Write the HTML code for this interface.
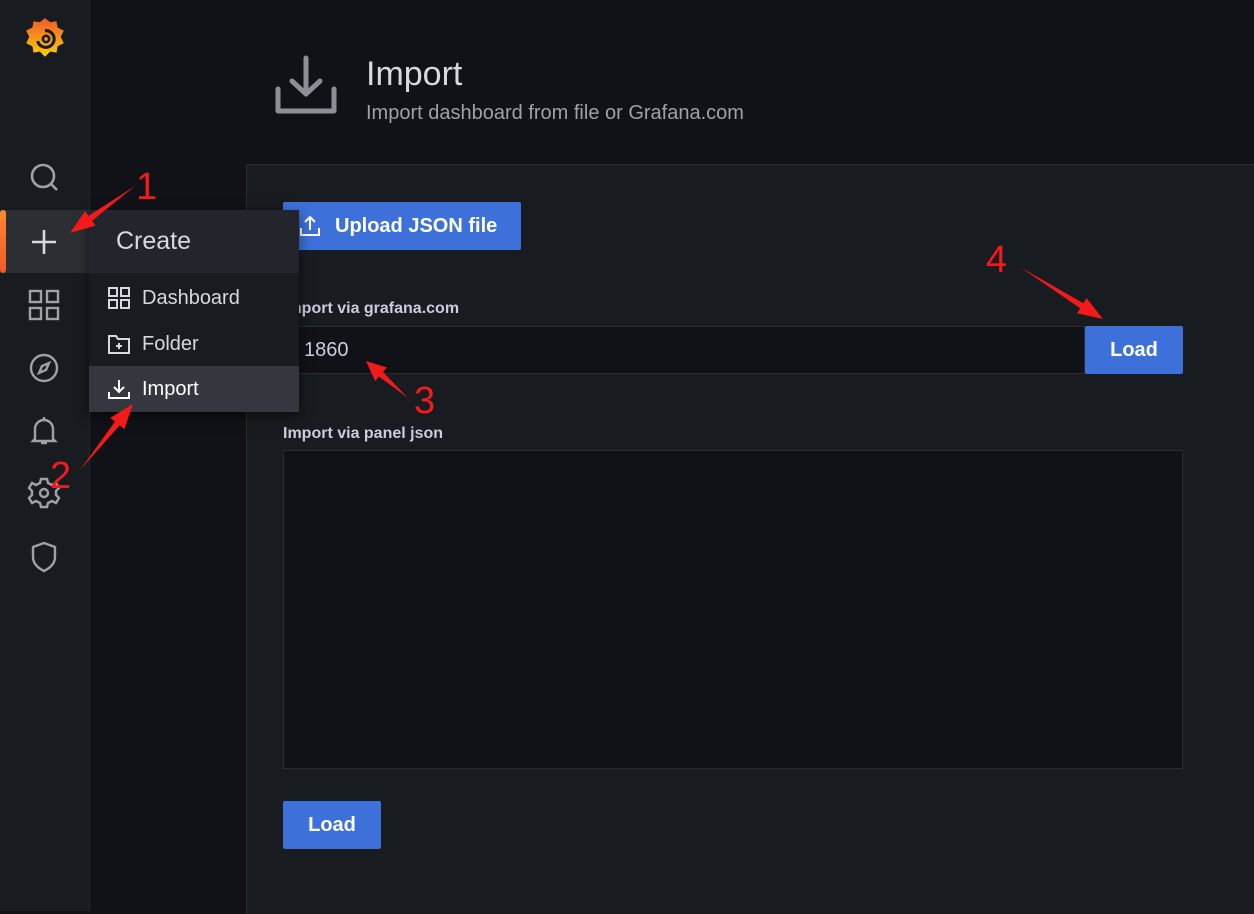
<!DOCTYPE html>
<html><head><meta charset="utf-8"><style>
*{box-sizing:border-box;margin:0;padding:0}
body{width:1254px;height:911px;background:#111217;font-family:"Liberation Sans",Roboto,sans-serif;position:relative;overflow:hidden;color:#ccccdc}
.side{position:absolute;left:0;top:0;width:90px;height:911px;background:#181b1f;border-right:1px solid #25272c}
.ic{position:absolute;left:27px;width:34px;height:34px}
.panel{position:absolute;left:246px;top:164px;width:1010px;height:750px;background:#181b1f;border-top:1px solid #2a2c31;border-left:1px solid #2a2c31}
.btn{position:absolute;background:#3d71d9;color:#fff;font-weight:bold;font-size:20px;border-radius:2px;display:flex;align-items:center;justify-content:center}
.lbl{position:absolute;font-size:16px;font-weight:bold;color:#ccccdc}
.menu{position:absolute;left:89px;top:210px;width:210px;height:202px;background:#181b1f;box-shadow:0 4px 12px rgba(0,0,0,.5)}
.mi{position:absolute;left:0;width:210px;height:46px;display:flex;align-items:center;font-size:20px;color:#d8d9e0}
.mi svg{margin-left:19px;margin-right:12px}
</style></head><body>
<div class="side">
<svg style="position:absolute;left:23px;top:16px" width="44" height="46" viewBox="0 0 42 44"><defs><linearGradient id="g" x1="0" y1="1" x2="0" y2="0"><stop offset="0" stop-color="#fcd00f"/><stop offset="1" stop-color="#f05a28"/></linearGradient></defs><path d="M21 2l5 4 6-1 1 6 6 3-3 6 3 6-6 3-1 6-6-1-5 5-5-5-6 1-1-6-6-3 3-6-3-6 6-3 1-6 6 1z" fill="url(#g)"/><path d="M21 14a8 8 0 1 1-7 10" fill="none" stroke="#181b1f" stroke-width="3"/><circle cx="22" cy="22" r="3" fill="none" stroke="#181b1f" stroke-width="2.5"/></svg>
<svg class="ic" style="top:160px" viewBox="0 0 34 34" fill="none" stroke="#9fa1a8" stroke-width="2.6"><circle cx="16" cy="16" r="11"/><path d="M24 24l6 6"/></svg>
<div style="position:absolute;left:0;top:210px;width:90px;height:63px;background:#2b2e33"></div>
<div style="position:absolute;left:0;top:210px;width:6px;height:63px;background:linear-gradient(#ff8833,#f05a28);border-radius:3px"></div>
<svg class="ic" style="top:225px" viewBox="0 0 34 34" stroke="#d8d9e0" stroke-width="2.6"><path d="M17 5v24M5 17h24"/></svg>
<svg class="ic" style="top:288px" viewBox="0 0 34 34" fill="none" stroke="#9fa1a8" stroke-width="2.4"><rect x="3" y="3" width="11" height="11"/><rect x="20" y="3" width="11" height="11"/><rect x="3" y="20" width="11" height="11"/><rect x="20" y="20" width="11" height="11"/></svg>
<svg class="ic" style="top:351px" viewBox="0 0 34 34" fill="none" stroke="#9fa1a8" stroke-width="2.4"><circle cx="17" cy="17" r="13"/><path d="M22 12l-3 7-7 3 3-7z"/></svg>
<svg class="ic" style="top:414px" viewBox="0 0 34 34" fill="none" stroke="#9fa1a8" stroke-width="2.4"><path d="M8 25V15a9 9 0 0118 0v10l2 2H6z M14 29h6 M17 3v3"/></svg>
<svg class="ic" style="top:476px" viewBox="0 0 34 34" fill="none" stroke="#9fa1a8" stroke-width="2.4"><circle cx="17" cy="17" r="4"/><path d="M14 3h6l1 4 4 2 4-2 3 5-3 3v4l3 3-3 5-4-2-4 2-1 4h-6l-1-4-4-2-4 2-3-5 3-3v-4l-3-3 3-5 4 2 4-2z"/></svg>
<svg class="ic" style="top:540px" viewBox="0 0 34 34" fill="none" stroke="#9fa1a8" stroke-width="2.4"><path d="M17 3l11 4v10c0 7-5 11-11 14C11 28 6 24 6 17V7z"/></svg>
</div>
<svg style="position:absolute;left:274px;top:55px" width="64" height="62" viewBox="0 0 64 62" fill="none" stroke="#8e8e96" stroke-width="5" stroke-linecap="round" stroke-linejoin="round"><path d="M32 3v36M18 26l14 13 14-13M4 34v22h56V34"/></svg>
<div style="position:absolute;left:366px;top:55px;font-size:34px;color:#d8d9e0">Import</div>
<div style="position:absolute;left:366px;top:102px;font-size:20px;color:#9fa1a8">Import dashboard from file or Grafana.com</div>
<div class="panel"></div>
<div class="btn" style="left:283px;top:202px;width:238px;height:48px;justify-content:flex-start;padding-left:16px"><svg width="22" height="22" viewBox="0 0 22 22" fill="none" stroke="#fff" stroke-width="2"><path d="M11 15V2M6 7l5-5 5 5M2 13v7h18v-7"/></svg><span style="margin-left:14px">Upload JSON file</span></div>
<div class="lbl" style="left:283px;top:300px">Import via grafana.com</div>
<div style="position:absolute;left:283px;top:326px;width:802px;height:48px;background:#111217;border:1px solid #2a2c31;font-size:20px;color:#ccccdc;padding:12px 0 0 20px">1860</div>
<div class="btn" style="left:1085px;top:326px;width:98px;height:48px">Load</div>
<div class="lbl" style="left:283px;top:425px">Import via panel json</div>
<div style="position:absolute;left:283px;top:450px;width:900px;height:319px;background:#111217;border:1px solid #2a2c31"></div>
<div class="btn" style="left:283px;top:801px;width:98px;height:48px">Load</div>
<div class="menu">
<div style="position:absolute;left:0;top:0;width:210px;height:63px;background:#22252b;font-size:25px;color:#d8d9e0;padding:17px 0 0 27px">Create</div>
<div class="mi" style="top:65px"><svg width="22" height="22" viewBox="0 0 22 22" fill="none" stroke="#d8d9e0" stroke-width="2"><rect x="1" y="1" width="8" height="8"/><rect x="13" y="1" width="8" height="8"/><rect x="1" y="13" width="8" height="8"/><rect x="13" y="13" width="8" height="8"/></svg>Dashboard</div>
<div class="mi" style="top:111px"><svg width="22" height="22" viewBox="0 0 22 22" fill="none" stroke="#d8d9e0" stroke-width="2"><path d="M1 3h7l2 3h11v14H1z M11 10v6M8 13h6"/></svg>Folder</div>
<div class="mi" style="top:156px;background:#34373d;height:46px"><svg width="22" height="22" viewBox="0 0 22 22" fill="none" stroke="#fff" stroke-width="2"><path d="M11 2v12M6 9l5 5 5-5M1 14v6h20v-6"/></svg><span style="color:#fff">Import</span></div>
</div>
<svg style="position:absolute;left:0;top:0" width="1254" height="911">
<g fill="#f21a1a" font-family="Liberation Sans" font-size="38"><text x="136" y="199">1</text><text x="50" y="488">2</text><text x="414" y="413">3</text><text x="986" y="272">4</text></g>
<g fill="#f21a1a">
<polygon points="135,186 92.1,220.8 95.6,225.6 70,233 85,211.1 88.5,215.9"/>
<polygon points="80,470 115,421.6 110.3,417.9 133,404 124.4,429.1 119.7,425.4"/>
<polygon points="408,398 379,376.5 375.1,381 366,361 386.9,367.5 383,372"/>
<polygon points="1020,267 1083.4,303.2 1086.6,298.1 1103,319 1077,313.3 1080.2,308.2"/>
</g>
</svg>
</body></html>
